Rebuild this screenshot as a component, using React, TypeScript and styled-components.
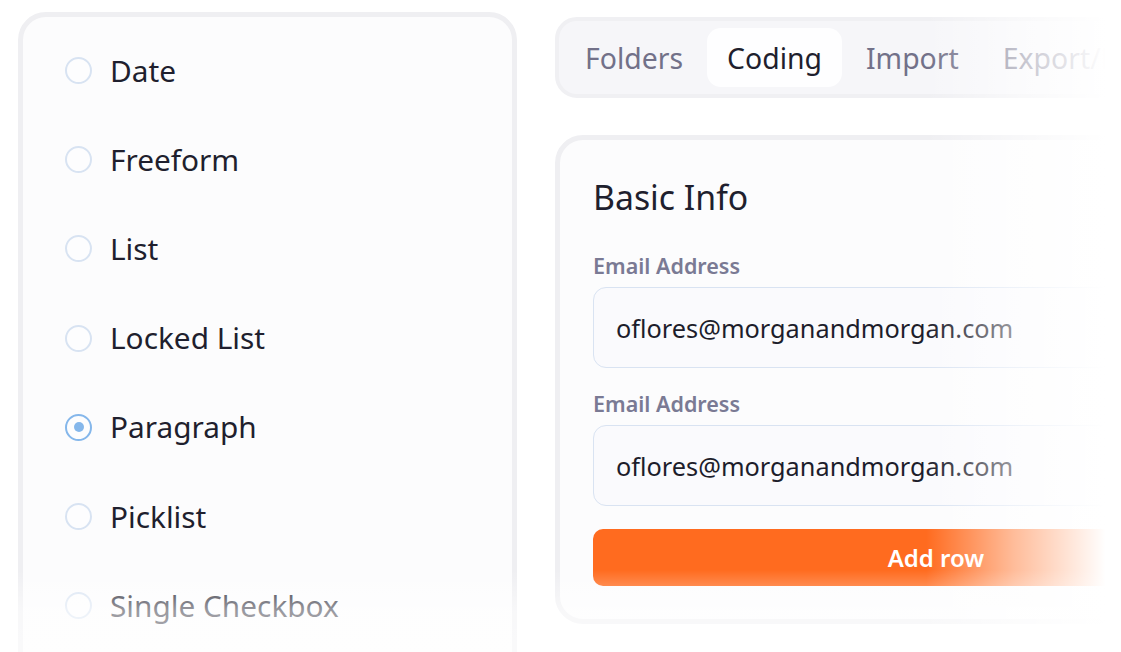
import styled, { createGlobalStyle } from "styled-components"

const GlobalStyle = createGlobalStyle`
  html, body {
    margin: 0;
    padding: 0;
    background: #ffffff;
  }
  body {
    width: 1121px;
    height: 652px;
    overflow: hidden;
    font-family: "Noto Sans", "Open Sans", sans-serif;
    color: #1f1f2e;
  }
  * {
    box-sizing: border-box;
  }
`

export const Page = styled.div`
  position: relative;
  width: 1121px;
  height: 652px;
  overflow: hidden;
  display: flex;
  align-items: flex-start;
  gap: 38px;
  padding: 12px 0 0 18px;
`

export const TypeCard = styled.div`
  flex: 0 0 499px;
  height: 720px;
  border: 5px solid #efeff2;
  border-radius: 28px;
  background: #fcfcfd;
  padding: 9px 0 0 42px;
  display: flex;
  flex-direction: column;
`

export const TypeOption = styled.label`
  height: 89.2px;
  flex-shrink: 0;
  display: flex;
  align-items: center;
  gap: 18px;
  font-size: 29.8px;
  line-height: 1;
  color: #1f1f2e;
`

export const Radio = styled.span<{ $checked?: boolean }>`
  width: 27px;
  height: 27px;
  flex: 0 0 27px;
  border-radius: 50%;
  border: 2px solid ${(p) => (p.$checked ? "#85b7eb" : "#d8e3f2")};
  background: #fdfdfe;
  display: flex;
  align-items: center;
  justify-content: center;

  &::after {
    content: "";
    display: ${(p) => (p.$checked ? "block" : "none")};
    width: 10px;
    height: 10px;
    border-radius: 50%;
    background: #85b7eb;
  }
`

export const RightColumn = styled.div`
  flex: 0 0 762px;
  margin-top: 5px;
  display: flex;
  flex-direction: column;
  gap: 37px;
`

export const TabBar = styled.div`
  height: 81px;
  border: 4px solid #f0f0f3;
  border-radius: 22px;
  background: #f6f6f9;
  padding: 7px 6px;
  display: flex;
  gap: 4px;
  overflow: hidden;
`

export const Tab = styled.div<{ $active?: boolean }>`
  height: 59px;
  padding: 0 20px;
  display: flex;
  align-items: center;
  flex-shrink: 0;
  border-radius: 14px;
  font-size: 28.4px;
  color: ${(p) => (p.$active ? "#1f1f2e" : "#727189")};
  background: ${(p) => (p.$active ? "#fefeff" : "transparent")};
`

export const InfoCard = styled.div`
  border: 5px solid #efeff2;
  border-radius: 28px;
  background: #fcfcfd;
  padding: 37px 33px 33px;
  display: flex;
  flex-direction: column;
`

export const CardTitle = styled.h2`
  margin: 0 0 37px;
  font-size: 33.8px;
  font-weight: 400;
  line-height: 40px;
  color: #1f1f2e;
`

export const FieldLabel = styled.div`
  font-size: 21.5px;
  font-weight: 600;
  line-height: 24px;
  color: #7a7a94;
  margin-bottom: 9px;
`

export const FieldInput = styled.div`
  height: 81px;
  border: 1.5px solid #d9e3f2;
  border-radius: 13px;
  background: #fafafd;
  padding-left: 22px;
  display: flex;
  align-items: center;
  font-size: 25.3px;
  color: #1d1d2b;
  margin-bottom: 24px;
`

export const AddButton = styled.button`
  height: 57px;
  border: none;
  border-radius: 10px;
  background: #ff6b1f;
  color: #ffffff;
  font-family: inherit;
  font-size: 24px;
  font-weight: 600;
  margin-top: -1px;
`

export const RightFade = styled.div`
  position: absolute;
  top: 0;
  right: 0;
  width: 195px;
  height: 100%;
  pointer-events: none;
  background: linear-gradient(
    to right,
    rgba(255, 255, 255, 0) 0%,
    rgba(255, 255, 255, 0.55) 45%,
    rgba(255, 255, 255, 1) 92%
  );
`

export const BottomFade = styled.div`
  position: absolute;
  left: 0;
  bottom: 0;
  width: 100%;
  height: 82px;
  pointer-events: none;
  background: linear-gradient(
    to bottom,
    rgba(255, 255, 255, 0) 0%,
    rgba(255, 255, 255, 0.55) 50%,
    rgba(255, 255, 255, 0.65) 100%
  );
`

const types = [
  "Date",
  "Freeform",
  "List",
  "Locked List",
  "Paragraph",
  "Picklist",
  "Single Checkbox",
]

const tabs = ["Folders", "Coding", "Import", "Export/Backup"]

export default function App(): JSX.Element {
  return (
    <>
      <GlobalStyle />
      <Page>
        <TypeCard>
          {types.map((t) => (
            <TypeOption key={t}>
              <Radio $checked={t === "Paragraph"} />
              {t}
            </TypeOption>
          ))}
        </TypeCard>
        <RightColumn>
          <TabBar>
            {tabs.map((t) => (
              <Tab key={t} $active={t === "Coding"}>
                {t}
              </Tab>
            ))}
          </TabBar>
          <InfoCard>
            <CardTitle>Basic Info</CardTitle>
            <FieldLabel>Email Address</FieldLabel>
            <FieldInput>oflores@morganandmorgan.com</FieldInput>
            <FieldLabel>Email Address</FieldLabel>
            <FieldInput>oflores@morganandmorgan.com</FieldInput>
            <AddButton>Add row</AddButton>
          </InfoCard>
        </RightColumn>
        <RightFade />
        <BottomFade />
      </Page>
    </>
  )
}
